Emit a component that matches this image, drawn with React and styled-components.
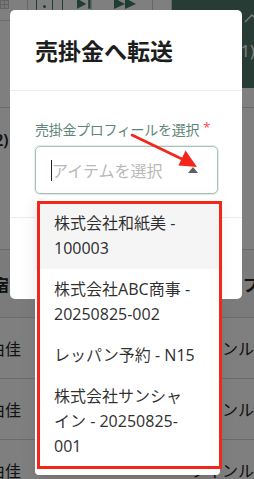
import React from "react";
import styled, { createGlobalStyle } from "styled-components";

const GlobalStyle = createGlobalStyle`
  html, body { margin: 0; padding: 0; background: #fff; }
  body { font-family: "Noto Sans", "Noto Sans CJK JP", sans-serif; }
  *, *::before, *::after { box-sizing: border-box; }
`;

const GREEN = "#3e7a66";

const Screen = styled.div`
  position: relative;
  width: 254px;
  height: 479px;
  overflow: hidden;
  background: #fff;
  color: #222;
`;

/* ---------- background page ---------- */
const TopSection = styled.div`
  display: flex;
  height: 88px;
`;
const LeftPane = styled.div`
  flex: 0 0 172px;
  display: flex;
  flex-direction: column;
`;
const Toolbar = styled.div`
  display: grid;
  grid-template-columns: 28px 35px 29px 61px 19px;
  height: 21px;
  border-bottom: 1px solid #d9d9d9;
`;
const ToolCell = styled.div`
  display: flex;
  align-items: flex-start;
  padding-left: ${(p) => p.$pad || 0}px;
  border-right: 1px solid ${(p) => (p.$dark ? GREEN : "#cfcfcf")};
`;
const GridIcon = styled.div`
  width: 9px;
  height: 9px;
  background: #c9c9c9;
  display: grid;
  grid-template-columns: 1fr 1fr;
  gap: 1px;
  padding: 1px;
  & > span { background: #eee; }
`;
const BoxIcon = styled.div`
  width: 17px;
  height: 24px;
  margin-top: -6px;
  border: 1px solid ${GREEN};
  display: flex;
  align-items: center;
  justify-content: center;
  & > span { width: 3px; height: 3px; background: ${GREEN}; border-radius: 50%; }
`;
const GreenPanel = styled.div`
  flex: 1;
  background: #4f786b;
  display: flex;
  flex-direction: column;
  padding-left: 64px;
  color: #fff;
`;
const Chevron = styled.svg`
  margin: 13px 0 0 8px;
  display: block;
`;
const PanelCount = styled.div`
  margin-top: 18px;
  font-size: 16px;
  line-height: 20px;
  white-space: nowrap;
`;
const Band = styled.div`
  height: 20px;
  border-bottom: 1px solid #d6d6d6;
`;
const Section = styled.div`
  height: 142px;
  padding-top: 20px;
  border-bottom: 1px solid #d6d6d6;
`;
const SectionCount = styled.div`
  margin-left: -11px;
  font-size: 16px;
  font-weight: 600;
  line-height: 24px;
  color: #222;
`;
const HeaderRow = styled.div`
  display: grid;
  grid-template-columns: 243px 1fr;
  align-items: center;
  height: 68px;
  background: #f6f6f6;
  border-bottom: 1px solid #d6d6d6;
  font-size: 16px;
  font-weight: 600;
  white-space: nowrap;
  & > span:first-child { margin-left: -7px; }
`;
const Row = styled.div`
  display: grid;
  grid-template-columns: 21px 169px 1fr;
  align-items: center;
  height: 61px;
  border-bottom: 1px solid #d6d6d6;
  font-size: 16px;
  white-space: nowrap;
`;
const NameCell = styled.div`
  display: flex;
  justify-content: flex-end;
  overflow: hidden;
`;

/* ---------- modal ---------- */
const Overlay = styled.div`
  position: absolute;
  inset: 0;
  background: rgba(0, 0, 0, 0.5);
`;
const Modal = styled.div`
  position: absolute;
  left: 10px;
  top: 10px;
  width: 232px;
  background: #fff;
  border-radius: 5px;
  display: flex;
  flex-direction: column;
`;
const ModalHeader = styled.div`
  height: 81px;
  display: flex;
  align-items: center;
  padding: 0 24px 0 25px;
  border-bottom: 1px solid #ececec;
`;
const Title = styled.h2`
  margin: 0;
  font-family: "Noto Sans CJK JP", sans-serif;
  font-size: 23px;
  font-weight: 700;
  line-height: 1;
  color: #1d1d1d;
`;
const ModalBody = styled.div`
  padding: 26px 24px 23px 25px;
`;
const Label = styled.label`
  display: block;
  font-size: 14px;
  letter-spacing: -0.3px;
  line-height: 20px;
  color: #5e8677;
  margin-bottom: 6px;
  white-space: nowrap;
`;
const Required = styled.span`
  color: #ff4d4f;
  margin-left: 4px;
  vertical-align: 3px;
  font-size: 13px;
`;
const SelectWrap = styled.div`
  position: relative;
`;
const SelectBox = styled.div`
  height: 48px;
  border: 1px solid #a7c2b7;
  box-shadow: 0 0 0 1px rgba(167, 194, 183, 0.3);
  border-radius: 5px;
  display: flex;
  align-items: center;
  padding: 0 19px 0 15px;
`;
const Caret = styled.span`
  width: 1px;
  height: 21px;
  background: #222;
`;
const Placeholder = styled.span`
  flex: 1;
  font-size: 16px;
  color: #b9b9b9;
  white-space: nowrap;
`;
const ArrowUp = styled.span`
  width: 0;
  height: 0;
  border-left: 5px solid transparent;
  border-right: 5px solid transparent;
  border-bottom: 6px solid #5f5f5f;
`;
const Dropdown = styled.ul`
  position: absolute;
  top: calc(100% + 1px);
  left: 0;
  width: 185px;
  margin: 0;
  padding: 8px 0;
  list-style: none;
  background: #fff;
  border-radius: 4px;
  box-shadow: 0 3px 6px -4px rgba(0, 0, 0, 0.12), 0 6px 16px 0 rgba(0, 0, 0, 0.08);
  z-index: 2;
`;
const Option = styled.li`
  padding: 8px 25px 8px 19px;
  font-size: 16px;
  line-height: 25px;
  color: rgba(0, 0, 0, 0.82);
  background: ${(p) => (p.$active ? "#f5f5f5" : "transparent")};
`;
const Footer = styled.div`
  height: 82px;
  border-top: 1px solid #ececec;
`;

/* ---------- annotations ---------- */
const Highlight = styled.div`
  position: absolute;
  left: 37px;
  top: 201px;
  width: 185px;
  height: 268px;
  border: 3px solid #f2261b;
  pointer-events: none;
  z-index: 5;
`;
const ArrowLayer = styled.svg`
  position: absolute;
  left: 0;
  top: 0;
  pointer-events: none;
  z-index: 6;
`;

const options = [
  "株式会社和紙美 - 100003",
  "株式会社ABC商事 - 20250825-002",
  "レッパン予約 - N15",
  "株式会社サンシャイン - 20250825-001",
];

export default function App() {
  return (
    <>
      <GlobalStyle />
      <Screen>
        <TopSection>
          <LeftPane>
            <Toolbar>
              <ToolCell>
                <GridIcon>
                  <span />
                  <span />
                  <span />
                  <span />
                </GridIcon>
              </ToolCell>
              <ToolCell $pad={8} $dark>
                <BoxIcon>
                  <span />
                </BoxIcon>
              </ToolCell>
              <ToolCell $pad={14}>
                <svg width="15" height="10" viewBox="0 0 15 10">
                  <polygon points="0,-2 10,4 0,9" fill={GREEN} />
                  <rect x="12" y="-2" width="2.5" height="11" fill={GREEN} />
                </svg>
              </ToolCell>
              <ToolCell $pad={22}>
                <svg width="23" height="10" viewBox="0 0 23 10">
                  <polygon points="0,-2 11,4 0,9" fill={GREEN} />
                  <polygon points="11,-2 22,4 11,9" fill={GREEN} />
                </svg>
              </ToolCell>
              <ToolCell />
            </Toolbar>
          </LeftPane>
          <GreenPanel>
            <Chevron width="16" height="10" viewBox="0 0 16 10">
              <polyline points="1,9 8,2 15,9" fill="none" stroke="#fff" strokeWidth="1.4" />
            </Chevron>
            <PanelCount>(1)</PanelCount>
          </GreenPanel>
        </TopSection>
        <Band />
        <Section>
          <SectionCount>(2)</SectionCount>
        </Section>
        <HeaderRow>
          <span>宿泊者名</span>
          <span>プラン</span>
        </HeaderRow>
        {[0, 1, 2].map((i) => (
          <Row key={i}>
            <NameCell>山田由佳</NameCell>
            <span />
            <span>ツインルーム</span>
          </Row>
        ))}

        <Overlay />

        <Modal>
          <ModalHeader>
            <Title>売掛金へ転送</Title>
          </ModalHeader>
          <ModalBody>
            <Label>
              売掛金プロフィールを選択<Required>*</Required>
            </Label>
            <SelectWrap>
              <SelectBox>
                <Caret />
                <Placeholder>アイテムを選択</Placeholder>
                <ArrowUp />
              </SelectBox>
              <Dropdown>
                {options.map((o, i) => (
                  <Option key={o} $active={i === 0}>
                    {o}
                  </Option>
                ))}
              </Dropdown>
            </SelectWrap>
          </ModalBody>
          <Footer />
        </Modal>

        <Highlight />
        <ArrowLayer width="254" height="479" viewBox="0 0 254 479">
          <line x1="132" y1="135" x2="184" y2="160" stroke="#f2261b" strokeWidth="2.6" strokeLinecap="round" />
          <polygon points="197,167 178.4,165.5 185.6,150.6" fill="#f2261b" />
        </ArrowLayer>
      </Screen>
    </>
  );
}
